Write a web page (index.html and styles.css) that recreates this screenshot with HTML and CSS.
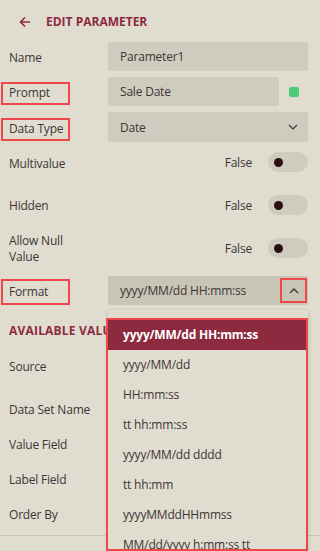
FILE: index.html
```html
<!DOCTYPE html>
<html lang="en">
<head>
    <meta charset="UTF-8">
    <meta name="viewport" content="width=device-width, initial-scale=1.0">
    <title>Edit Parameter</title>
    <link rel="stylesheet" href="styles.css">
</head>
<body>
    <div class="panel">
        <div class="header">
            <svg class="back" width="12" height="12" viewBox="0 0 12 12">
                <path d="M11 6H1.5M6 1.5L1.5 6 6 10.5" fill="none" stroke="#8e2a40" stroke-width="1.6"/>
            </svg>
            <span class="title">EDIT PARAMETER</span>
        </div>

        <div class="row">
            <div class="label">Name</div>
            <div class="field">Parameter1</div>
        </div>

        <div class="row">
            <div class="label marked">Prompt</div>
            <div class="field short">Sale Date</div>
            <span class="status-dot"></span>
        </div>

        <div class="row tall">
            <div class="label marked">Data Type</div>
            <div class="field select">
                <span>Date</span>
                <svg width="10" height="6" viewBox="0 0 10 6">
                    <path d="M1 1l4 4 4-4" fill="none" stroke="#3d3535" stroke-width="1.2"/>
                </svg>
            </div>
        </div>

        <div class="toggle-row first">
            <div class="label">Multivalue</div>
            <div class="toggle-value">False</div>
            <div class="toggle"><span class="knob"></span></div>
        </div>

        <div class="toggle-row">
            <div class="label">Hidden</div>
            <div class="toggle-value">False</div>
            <div class="toggle"><span class="knob"></span></div>
        </div>

        <div class="toggle-row last">
            <div class="label">Allow Null<br>Value</div>
            <div class="toggle-value">False</div>
            <div class="toggle"><span class="knob"></span></div>
        </div>

        <div class="row format-row">
            <div class="label marked">Format</div>
            <div class="field select open">
                <span>yyyy/MM/dd HH:mm:ss</span>
                <span class="chevron-box">
                    <svg width="10" height="6" viewBox="0 0 10 6">
                        <path d="M1 5l4-4 4 4" fill="none" stroke="#3d3535" stroke-width="1.3"/>
                    </svg>
                </span>
            </div>

            <div class="dropdown">
                <ul class="options">
                    <li class="selected">yyyy/MM/dd HH:mm:ss</li>
                    <li>yyyy/MM/dd</li>
                    <li>HH:mm:ss</li>
                    <li>tt hh:mm:ss</li>
                    <li>yyyy/MM/dd dddd</li>
                    <li>tt hh:mm</li>
                    <li>yyyyMMddHHmmss</li>
                    <li>MM/dd/yyyy h:mm:ss tt</li>
                </ul>
            </div>
        </div>

        <div class="section-title">AVAILABLE VALUES</div>

        <div class="plain-row source">
            <div class="label">Source</div>
        </div>
        <div class="plain-row">
            <div class="label">Data Set Name</div>
        </div>
        <div class="plain-row">
            <div class="label">Value Field</div>
        </div>
        <div class="plain-row">
            <div class="label">Label Field</div>
        </div>
        <div class="plain-row">
            <div class="label">Order By</div>
        </div>

        <div class="divider"></div>
    </div>
</body>
</html>
```

FILE: styles.css
```css
* {
    margin: 0;
    padding: 0;
    box-sizing: border-box;
    font-family: 'Open Sans', 'Liberation Sans', sans-serif;
}

body {
    background-color: #e0ddd0;
    height: 551px;
    overflow: hidden;
    color: #3d3535;
    font-size: 12px;
    letter-spacing: -0.2px;
}

.panel {
    padding: 0 12px 0 1px;
}

.header {
    height: 42px;
    display: flex;
    align-items: center;
    padding-left: 18px;
    padding-top: 1px;
}

.back {
    margin-right: 15px;
}

.title {
    color: #8e2a40;
    font-weight: bold;
    font-size: 12px;
    letter-spacing: 0;
}

.row {
    display: flex;
    align-items: center;
    height: 29px;
    margin-bottom: 6px;
    position: relative;
}

.row.tall {
    height: 30px;
}

.label {
    width: 69px;
    padding: 1px 0 2px 6px;
    border: 2px solid transparent;
    line-height: 16px;
    margin-right: 38px;
    flex-shrink: 0;
    white-space: nowrap;
}

.label.marked {
    border-color: #f0484a;
}

.row .label {
    margin-top: 4px;
}

.field {
    flex: 1;
    height: 100%;
    background: #cfccbf;
    border-radius: 2px;
    padding: 0 12px;
    display: flex;
    align-items: center;
}

.field.short {
    flex: none;
    width: 171px;
}

.status-dot {
    width: 10px;
    height: 10px;
    border-radius: 2px;
    background: #4ecb7a;
    margin-left: 10px;
}

.select {
    justify-content: space-between;
    padding-right: 10px;
}

.select.open {
    background: #c8c5b7;
    padding-right: 1px;
}

.chevron-box {
    width: 27px;
    height: 25px;
    border: 2px solid #f0484a;
    display: flex;
    align-items: center;
    justify-content: center;
}

.toggle-row {
    display: flex;
    align-items: center;
    height: 20px;
    margin-bottom: 23px;
}

.toggle-row .label {
    margin-top: 2px;
}

.toggle-row.first {
    margin-top: 10px;
}

.toggle-row.first .label {
    margin-top: 5px;
}

.toggle-row.last {
    margin-bottom: 18px;
}

.toggle-value {
    margin-left: auto;
    margin-right: 16px;
}

.toggle {
    width: 40px;
    height: 20px;
    border-radius: 10px;
    background: #cfccbf;
    display: flex;
    align-items: center;
    padding-left: 6px;
}

.knob {
    width: 9px;
    height: 9px;
    border-radius: 50%;
    background: #2b0d14;
}

.format-row {
    margin-bottom: 0;
}

.format-row .label {
    margin-top: 2px;
    padding-top: 3px;
    padding-bottom: 3px;
}

.dropdown {
    position: absolute;
    top: 34px;
    left: 107px;
    width: 200px;
    height: 260px;
    background: #e0ddd0;
    box-shadow: 0 1px 4px rgba(0, 0, 0, 0.18);
    padding-top: 8px;
    z-index: 2;
}

.options {
    list-style: none;
    margin-left: -2px;
    width: 202px;
    border: 2px solid #f0484a;
    height: 233px;
    overflow: hidden;
}

.options li {
    height: 30px;
    line-height: 29px;
    padding-left: 15px;
    font-size: 12px;
    color: #3d3535;
    white-space: nowrap;
}

.options li.selected {
    background: #8e2a40;
    color: #fff;
    font-weight: bold;
}

.section-title {
    color: #8e2a40;
    font-weight: bold;
    font-size: 12px;
    height: 20px;
    line-height: 20px;
    margin-top: 16px;
    padding-left: 8px;
    white-space: nowrap;
    letter-spacing: 0.2px;
}

.plain-row {
    display: flex;
    align-items: center;
    height: 30px;
    margin-bottom: 5px;
}

.plain-row .label {
    width: auto;
}

.plain-row.source {
    margin-top: 11px;
    margin-bottom: 13px;
}

.divider {
    border-top: 1px solid #c9c6b5;
    margin: 5px -12px 0 -1px;
}
```
